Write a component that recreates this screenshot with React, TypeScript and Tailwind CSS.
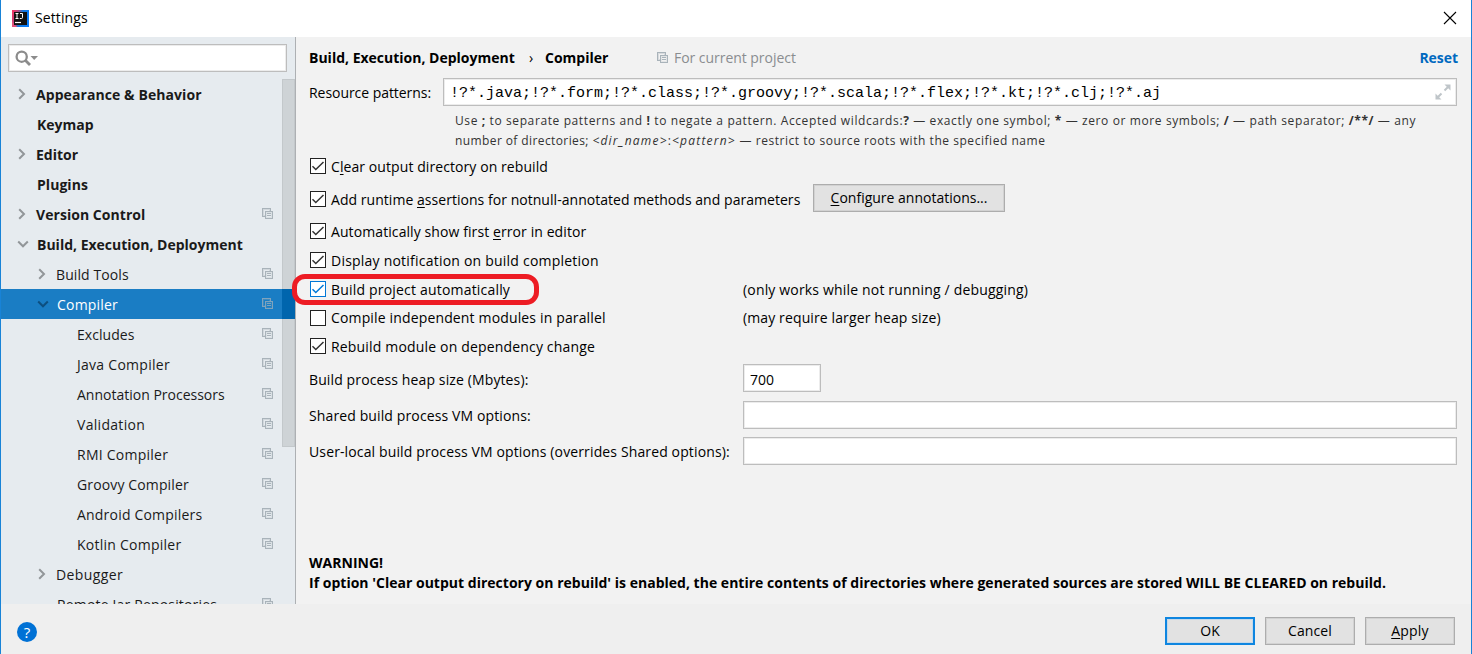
import type { ReactNode } from "react";

function ProjectIcon({ className = "text-[#a9b3ba]" }: { className?: string }) {
  return (
    <svg width="11" height="11" viewBox="0 0 11 11" fill="none" stroke="currentColor" shapeRendering="crispEdges" className={`shrink-0 ${className}`}>
      <path d="M2.500 7.500H1.500V1.500H7.500V2.500" opacity="0.350" />
      <path d="M2.500 8.500H.5V.5H8.500V2.500" />
      <rect x="3.500" y="3.500" width="7" height="7" />
      <rect x="4.500" y="4.500" width="5" height="5" opacity="0.200" />
      <path d="M5 5.500H9M5 7.500H9" />
    </svg>
  );
}

function Chevron({ open, selected }: { open: boolean; selected?: boolean }) {
  return (
    <svg width="12" height="12" viewBox="0 0 12 12" fill="none" strokeWidth="2" className={selected ? "stroke-[#0d4f80]" : "stroke-[#929699]"}>
      <path d={open ? "M1.200 3.500L6 8.300L10.800 3.500" : "M3.200 1.200L8 6L3.200 10.800"} />
    </svg>
  );
}

type Row = { label: string; pad: string; arrow?: "open" | "closed"; bold?: boolean; icon?: boolean; selected?: boolean; track: string };

const rows: Row[] = [
  { label: "Appearance & Behavior", pad: "pl-[15px]", arrow: "closed", bold: true, track: "tracking-[0.08px]" },
  { label: "Keymap", pad: "pl-[36px]", bold: true, track: "tracking-[0px]" },
  { label: "Editor", pad: "pl-[15px]", arrow: "closed", bold: true, track: "tracking-[0px]" },
  { label: "Plugins", pad: "pl-[36px]", bold: true, track: "tracking-[0.05px]" },
  { label: "Version Control", pad: "pl-[15px]", arrow: "closed", bold: true, icon: true, track: "tracking-[0.05px]" },
  { label: "Build, Execution, Deployment", pad: "pl-[16px]", arrow: "open", bold: true, track: "tracking-[0px]" },
  { label: "Build Tools", pad: "pl-[35px]", arrow: "closed", icon: true, track: "tracking-[0.1px]" },
  { label: "Compiler", pad: "pl-[36px]", arrow: "open", icon: true, selected: true, track: "tracking-[0.2px]" },
  { label: "Excludes", pad: "pl-[76px]", icon: true, track: "tracking-[0.05px]" },
  { label: "Java Compiler", pad: "pl-[76px]", icon: true, track: "tracking-[0.27px]" },
  { label: "Annotation Processors", pad: "pl-[76px]", icon: true, track: "tracking-[0px]" },
  { label: "Validation", pad: "pl-[76px]", icon: true, track: "tracking-[0.3px]" },
  { label: "RMI Compiler", pad: "pl-[76px]", icon: true, track: "tracking-[0.25px]" },
  { label: "Groovy Compiler", pad: "pl-[76px]", icon: true, track: "tracking-[0.13px]" },
  { label: "Android Compilers", pad: "pl-[76px]", icon: true, track: "tracking-[0.2px]" },
  { label: "Kotlin Compiler", pad: "pl-[76px]", icon: true, track: "tracking-[0.25px]" },
  { label: "Debugger", pad: "pl-[35px]", arrow: "closed", track: "tracking-[0.4px]" },
  { label: "Remote Jar Repositories", pad: "pl-[56px]", icon: true, track: "tracking-[0.17px]" },
];

function TreeRow({ row }: { row: Row }) {
  return (
    <div className={`flex h-[30px] shrink-0 items-center ${row.pad} ${row.selected ? "bg-[#1a7dc4] text-white" : "text-[#1a1a1a]"}`}>
      {row.arrow && (
        <span className="w-[20px] shrink-0 pb-px">
          <Chevron open={row.arrow === "open"} selected={row.selected} />
        </span>
      )}
      <span className={`grow pt-px ${row.bold ? "font-bold" : ""} ${row.track}`}>{row.label}</span>
      {row.icon && <ProjectIcon className={row.selected ? "text-[#7fa3bd] mb-0.5" : "text-[#a9b3ba] mb-0.5"} />}
      <span className={`ml-[9px] h-full w-[13px] shrink-0 ${row.selected ? "relative z-10 bg-[#0065ad]" : ""}`} />
    </div>
  );
}

function CheckRow({ checked = true, active, height, note, track = "", children, extra }: { checked?: boolean; active?: boolean; height: string; note?: ReactNode; track?: string; children: ReactNode; extra?: ReactNode }) {
  return (
    <div className={`flex items-center ${height}`}>
      <div className="flex w-[433px] shrink-0 items-center pl-px">
        <span className={`flex size-4 shrink-0 items-center justify-center border bg-white ${active ? "border-[#0078d7] text-[#0078d7]" : "border-[#222] text-[#333]"}`}>
          {checked && (
            <svg width="14" height="14" viewBox="0 0 14 14" fill="none" stroke="currentColor" strokeWidth="1.500">
              <path d="M1.500 7.300L4.800 10.500L12.500 3" />
            </svg>
          )}
        </span>
        <span className={`ml-[5px] whitespace-nowrap ${track}`}>{children}</span>
      </div>
      {note}
      {extra}
    </div>
  );
}

const field = "border border-[#bdbdbd] bg-white shadow-[inset_0_0_0_1px_#ececec]";
const button = "flex h-7 items-center justify-center border border-[#adadad] bg-[#e2e2e2] shadow-[inset_0_0_0_1px_#d2d2d2]";
const U = ({ children }: { children: ReactNode }) => <span className="underline decoration-1 underline-offset-2">{children}</span>;

export default function App() {
  return (
    <div className="flex h-[654px] w-[1472px] flex-col overflow-hidden border-x border-[#1883d7] bg-[#f2f2f2] font-['Open_Sans','Noto_Sans',sans-serif] text-[14px] leading-5 text-black">
      <header className="flex h-[37px] shrink-0 items-center bg-white pr-[14px] pb-px pl-[11px]">
        <svg width="17" height="17" viewBox="0 0 17 17">
          <defs>
            <linearGradient id="logo" x1="0" y1="0" x2="1" y2="0.300">
              <stop offset="0" stopColor="#ff315f" />
              <stop offset="0.350" stopColor="#b04a80" />
              <stop offset="0.600" stopColor="#1877d8" />
              <stop offset="1" stopColor="#087cfa" />
            </linearGradient>
          </defs>
          <rect width="17" height="17" fill="url(#logo)" />
          <path d="M0 11L5 17H0Z" fill="#e0507a" />
          <rect x="2" y="2" width="13" height="13" fill="#111" />
          <path d="M3.500 3.500H6.500M5 3.500V8.500M3.500 8.500H6.500M8 3.500H10.500V7.500Q10.500 8.500 9.500 8.500H7.800" fill="none" stroke="#fff" strokeWidth="1" />
          <path d="M3 12.500H9" stroke="#fff" strokeWidth="1.200" />
        </svg>
        <span className="ml-[6px] grow tracking-[0.1px]">Settings</span>
        <svg width="14" height="14" viewBox="0 0 14 14" stroke="#000" strokeWidth="1.100">
          <path d="M1 1L13 13M13 1L1 13" />
        </svg>
      </header>

      <div className="flex h-[567px] shrink-0">
        <aside className="relative flex w-[295px] shrink-0 flex-col overflow-hidden border-r border-[#adb0b3] bg-[#e6ebef]">
          <div className={`mt-[7px] ml-[7px] flex h-7 w-[279px] shrink-0 items-center pl-[6px] ${field}`}>
            <svg width="24" height="18" viewBox="0 0 24 18" fill="none" stroke="#8c8c8c">
              <circle cx="6.700" cy="7.700" r="5.100" strokeWidth="2.300" />
              <path d="M10.300 11.300L15 16" strokeWidth="2.800" />
              <path d="M15.500 7H23L19.200 11Z" fill="#8c8c8c" stroke="none" />
            </svg>
          </div>
          <nav className="mt-[7px] flex flex-col">
            {rows.map((row) => (
              <TreeRow key={row.label} row={row} />
            ))}
          </nav>
          <div className="absolute top-[42px] right-0 h-[368px] w-[13px] border border-black/5 bg-black/10" />
        </aside>

        <main className="flex grow flex-col pl-[13px]">
          <div className="flex h-[41px] shrink-0 items-center pr-[13px]">
            <span className="w-[206px] font-bold whitespace-nowrap">Build, Execution, Deployment</span>
            <span className="w-[32px] text-center">›</span>
            <span className="w-[110px] -translate-x-[2px] font-bold">Compiler</span>
            <ProjectIcon />
            <span className="ml-[6px] grow tracking-[-0.04px] text-[#8a8d90]">For current project</span>
            <span className="font-bold tracking-[-0.04px] text-[#0069c0]">Reset</span>
          </div>

          <div className="flex h-7 shrink-0 items-center">
            <span className="w-[134px] pt-px tracking-[-0.05px]">Resource patterns:</span>
            <div className={`flex h-7 w-[1014px] items-center justify-between pr-[5px] pl-[6px] ${field}`}>
              <span className="pt-[3px] font-['Liberation_Mono',monospace] text-[15px]">!?*.java;!?*.form;!?*.class;!?*.groovy;!?*.scala;!?*.flex;!?*.kt;!?*.clj;!?*.aj</span>
              <svg width="16" height="16" viewBox="0 0 16 16" fill="#bfc5c9" stroke="#bfc5c9" strokeWidth="2">
                <path d="M9.500 6.500L13 3M6.500 9.500L3 13" />
                <path d="M9.500 .5H15.500V6.500ZM.5 9.500V15.500H6.500Z" stroke="none" />
              </svg>
            </div>
          </div>

          <div className="mt-[5px] h-10 shrink-0 pl-[146px] text-[12px] whitespace-nowrap text-[#333]">
            <p className="tracking-[0.610px]">Use <b>;</b> to separate patterns and <b>!</b> to negate a pattern. Accepted wildcards:<b>?</b> — exactly one symbol; <b>*</b> — zero or more symbols; <b>/</b> — path separator; <b>/**/</b> — any</p>
            <p className="tracking-[0.540px]"><span className="tracking-[0.400px]">number of directories; </span><span className="tracking-[1.200px]"><i>&lt;dir_name&gt;</i>:<i>&lt;pattern&gt;</i></span> — restrict to source roots with the specified name</p>
          </div>

          <CheckRow height="h-[30px]" track="pt-px tracking-[0.080px]">C<U>l</U>ear output directory on rebuild</CheckRow>
          <CheckRow
            height="h-[36px]"
            track="pt-px tracking-[0.040px]"
            extra={<button className={`mb-[2px] ml-[71px] w-[192px] ${button}`}><span><U>C</U>onfigure annotations...</span></button>}
          >
            Add runtime <U>a</U>ssertions for notnull-annotated methods and parameters
          </CheckRow>
          <CheckRow height="h-[28px]" track="pt-px tracking-[0.090px]">Automatically show first <U>e</U>rror in editor</CheckRow>
          <CheckRow height="h-[30px]" track="pt-px tracking-[0.220px]">Display notification on build completion</CheckRow>
          <div className="relative">
            <CheckRow height="h-[28px]" active track="pt-px tracking-[0.190px]" note={<span className="pt-px pl-px tracking-[0.170px]">(only works while not running / debugging)</span>}>Build project automatically</CheckRow>
            <div className="absolute -top-px -left-[17px] z-20 h-[31px] w-[247px] rounded-[13px] border-5 border-[#ed1c24]" />
          </div>
          <CheckRow height="h-[30px]" checked={false} track="pb-px tracking-[0.150px]" note={<span className="pb-px pl-px tracking-[0.120px]">(may require larger heap size)</span>}>Compile independent modules in parallel</CheckRow>
          <CheckRow height="h-[26px]" track="pt-px tracking-[0.170px]">Rebuild module on dependency change</CheckRow>

          <div className="flex h-[38px] shrink-0 items-center">
            <span className="w-[434px] pt-[3px] tracking-[0.120px]">Build process heap size (Mbytes):</span>
            <div className={`flex h-7 w-[78px] items-center pt-[3px] pl-[6px] ${field}`}>700</div>
          </div>
          <div className="flex h-[35px] shrink-0 items-center">
            <span className="w-[434px] pt-[3px] tracking-[0.120px]">Shared build process VM options:</span>
            <div className={`h-7 w-[714px] ${field}`} />
          </div>
          <div className="flex h-[38px] shrink-0 items-center">
            <span className="w-[434px] pt-px tracking-[0.130px]">User-local build process VM options (overrides Shared options):</span>
            <div className={`h-7 w-[714px] ${field}`} />
          </div>

          <div className="mt-auto mb-[11px] font-bold tracking-[0.015px]">
            <p>WARNING!</p>
            <p>If option 'Clear output directory on rebuild' is enabled, the entire contents of directories where generated sources are stored WILL BE CLEARED on rebuild.</p>
          </div>
        </main>
      </div>

      <footer className="flex grow items-center bg-[#efefef] pr-[16px] pl-[16px]">
        <span className="mt-[6px] flex size-5 items-center justify-center rounded-full bg-[#0071d5] text-[15px] text-white">?</span>
        <div className="mt-[4px] ml-auto flex gap-[10px]">
          <button className="flex h-7 w-[90px] items-center justify-center border-2 border-[#0f86e0] bg-[#e2e2e2] shadow-[inset_0_0_0_1px_#c5d9ea]">OK</button>
          <button className={`w-[90px] tracking-[0.1px] ${button}`}>Cancel</button>
          <button className={`w-[90px] tracking-[0.2px] ${button}`}><span><U>A</U>pply</span></button>
        </div>
      </footer>
    </div>
  );
}
